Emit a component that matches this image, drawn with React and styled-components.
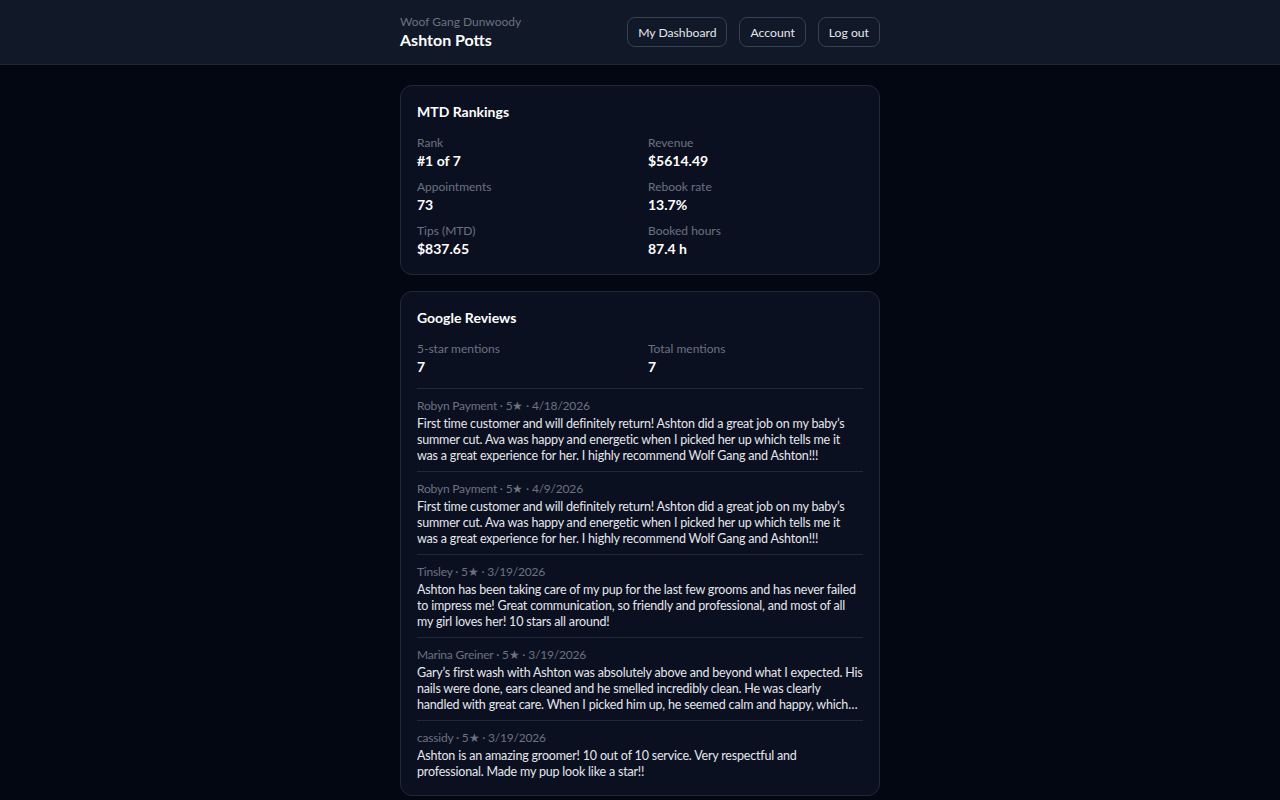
import React from "react";
import styled, { createGlobalStyle } from "styled-components";

const Global = createGlobalStyle`
  html, body { margin: 0; padding: 0; background: #030712; }
  body { font-family: "Lato", "Noto Sans", sans-serif; color: #f3f4f6; }
  * { box-sizing: border-box; }
`;

const Header = styled.header`
  background: #111827;
  border-bottom: 1px solid #1f2937;
  height: 65px;
`;

const HeaderInner = styled.div`
  width: 480px;
  margin: 0 auto;
  height: 64px;
  display: flex;
  align-items: center;
  justify-content: space-between;
`;

const Brand = styled.div`
  display: flex;
  flex-direction: column;
  margin-top: -1px;
`;

const Shop = styled.div`
  font-size: 12px;
  line-height: 16px;
  color: #6b7280;
`;

const Name = styled.div`
  font-size: 16px;
  line-height: 20px;
  font-weight: 700;
  color: #ffffff;
`;

const Nav = styled.nav`
  display: flex;
  gap: 12px;
`;

const NavButton = styled.button`
  font-family: inherit;
  font-size: 12.2px;
  height: 30px;
  padding: 0 10px;
  background: #111827;
  color: #e5e7eb;
  border: 1px solid #374151;
  border-radius: 8px;
  cursor: pointer;
`;

const Main = styled.main`
  width: 480px;
  margin: 0 auto;
  padding: 20px 0 4px;
  display: flex;
  flex-direction: column;
  gap: 16px;
`;

const Card = styled.section`
  background: #0b1020;
  border: 1px solid #1f2937;
  border-radius: 12px;
  padding: 16px 16px 15px;
`;

const CardTitle = styled.h2`
  margin: 0 0 13px;
  font-size: 14px;
  line-height: 20px;
  font-weight: 700;
  color: #ffffff;
`;

const StatGrid = styled.div`
  display: grid;
  grid-template-columns: 1fr 1fr;
  column-gap: 16px;
  row-gap: 8px;
`;

const Stat = styled.div`
  display: flex;
  flex-direction: column;
`;

const StatLabel = styled.div`
  font-size: 12px;
  line-height: 16px;
  color: #6b7280;
`;

const StatValue = styled.div`
  font-size: 14px;
  line-height: 20px;
  font-weight: 700;
  color: #ffffff;
`;

const ReviewList = styled.div`
  margin-top: 11px;
  display: flex;
  flex-direction: column;
`;

const Review = styled.article`
  border-top: 1px solid #1f2937;
  padding: 9px 0 7px;
  &:last-child { padding-bottom: 0; }
`;

const ReviewMeta = styled.div`
  font-size: 12px;
  line-height: 16px;
  letter-spacing: -0.2px;
  color: #6b7280;
  margin-bottom: 2px;
`;

const ReviewText = styled.p`
  margin: 0;
  font-size: 12.5px;
  line-height: 16px;
  letter-spacing: -0.19px;
  color: #e5e7eb;
  display: -webkit-box;
  -webkit-line-clamp: 3;
  -webkit-box-orient: vertical;
  overflow: hidden;
`;

const stats = [
  ["Rank", "#1 of 7"],
  ["Revenue", "$5614.49"],
  ["Appointments", "73"],
  ["Rebook rate", "13.7%"],
  ["Tips (MTD)", "$837.65"],
  ["Booked hours", "87.4 h"],
];

const reviews = [
  {
    meta: "Robyn Payment · 5★ · 4/18/2026",
    text: "First time customer and will definitely return! Ashton did a great job on my baby’s summer cut. Ava was happy and energetic when I picked her up which tells me it was a great experience for her. I highly recommend Wolf Gang and Ashton!!!",
  },
  {
    meta: "Robyn Payment · 5★ · 4/9/2026",
    text: "First time customer and will definitely return! Ashton did a great job on my baby’s summer cut. Ava was happy and energetic when I picked her up which tells me it was a great experience for her. I highly recommend Wolf Gang and Ashton!!!",
  },
  {
    meta: "Tinsley · 5★ · 3/19/2026",
    text: "Ashton has been taking care of my pup for the last few grooms and has never failed to impress me! Great communication, so friendly and professional, and most of all my girl loves her! 10 stars all around!",
  },
  {
    meta: "Marina Greiner · 5★ · 3/19/2026",
    text: "Gary’s first wash with Ashton was absolutely above and beyond what I expected. His nails were done, ears cleaned and he smelled incredibly clean. He was clearly handled with great care. When I picked him up, he seemed calm and happy, which tells me he was treated with kindness and patience the entire time.",
  },
  {
    meta: "cassidy · 5★ · 3/19/2026",
    text: "Ashton is an amazing groomer! 10 out of 10 service. Very respectful and professional. Made my pup look like a star!!",
  },
];

export default function App() {
  return (
    <>
      <Global />
      <Header>
        <HeaderInner>
          <Brand>
            <Shop>Woof Gang Dunwoody</Shop>
            <Name>Ashton Potts</Name>
          </Brand>
          <Nav>
            <NavButton>My Dashboard</NavButton>
            <NavButton>Account</NavButton>
            <NavButton>Log out</NavButton>
          </Nav>
        </HeaderInner>
      </Header>
      <Main>
        <Card>
          <CardTitle>MTD Rankings</CardTitle>
          <StatGrid>
            {stats.map(([l, v]) => (
              <Stat key={l}>
                <StatLabel>{l}</StatLabel>
                <StatValue>{v}</StatValue>
              </Stat>
            ))}
          </StatGrid>
        </Card>
        <Card>
          <CardTitle>Google Reviews</CardTitle>
          <StatGrid>
            <Stat>
              <StatLabel>5-star mentions</StatLabel>
              <StatValue>7</StatValue>
            </Stat>
            <Stat>
              <StatLabel>Total mentions</StatLabel>
              <StatValue>7</StatValue>
            </Stat>
          </StatGrid>
          <ReviewList>
            {reviews.map((r, i) => (
              <Review key={i}>
                <ReviewMeta>{r.meta}</ReviewMeta>
                <ReviewText>{r.text}</ReviewText>
              </Review>
            ))}
          </ReviewList>
        </Card>
      </Main>
    </>
  );
}
